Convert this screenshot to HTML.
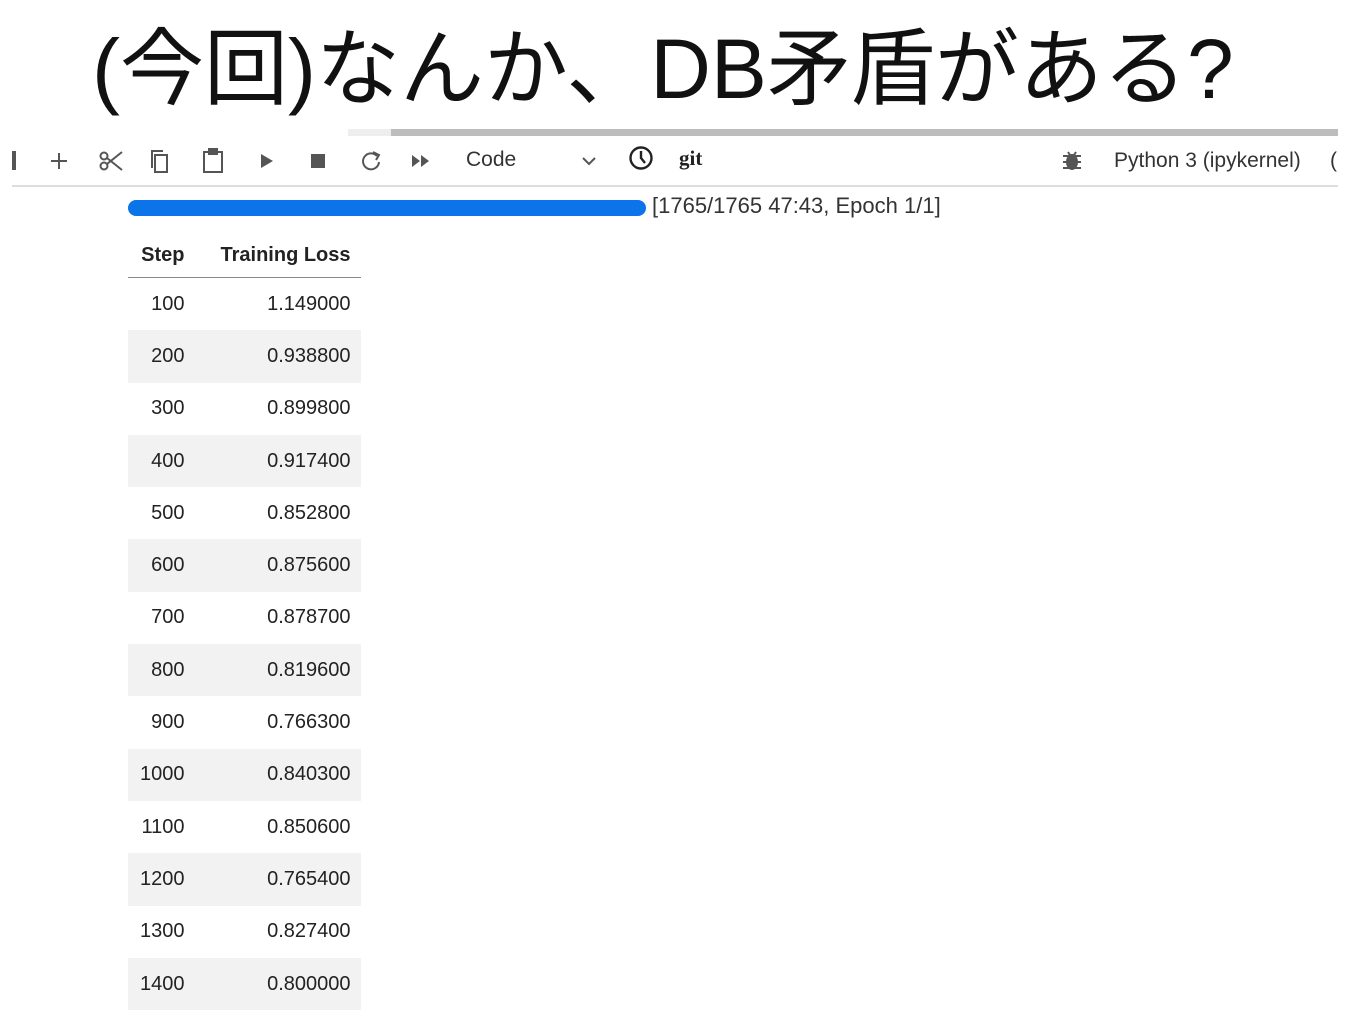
<!DOCTYPE html>
<html><head><meta charset="utf-8"><style>
body{margin:0;width:1372px;height:967px;background:#fff;overflow:hidden;position:relative;font-family:"Liberation Sans","Noto Sans CJK JP",sans-serif;}
.t{position:absolute;left:92px;top:14px;font-size:84px;color:#111;white-space:nowrap;line-height:110px}
.bar{position:absolute;left:348px;top:129px;width:990px;height:7px;background:#bdbdbd}
.bar2{position:absolute;left:348px;top:129px;width:43px;height:7px;background:#eee}
.tb{position:absolute;top:140px;left:12px;width:1326px;height:45px;border-bottom:2px solid #ddd}
.tx{position:absolute;font-size:21px;color:#333}
.pb{position:absolute;left:128px;top:200px;width:518px;height:16px;border-radius:8px;background:#0a74e8}
.pt{position:absolute;left:652px;top:193px;font-size:22px;color:#333}
table{position:absolute;left:128px;top:234px;border-collapse:collapse;font-size:20px;color:#222}
th{height:43px;padding:0 12px;border-bottom:1px solid #888;font-weight:bold;text-align:right}
td{height:52.3px;padding:0 12px;text-align:right}
td:last-child{padding-left:65px;padding-right:10px}
tr:nth-child(odd) td{background:#f2f2f2}
</style></head><body>
<div class="t">(今回)なんか、DB矛盾がある?</div>
<div class="bar"></div><div class="bar2"></div>
<div class="tb"></div>
<svg width="1372" height="190" style="position:absolute;left:0;top:0" fill="none" stroke="#555" stroke-width="2">
<rect x="12" y="151" width="4" height="19" fill="#555" stroke="none"/>
<path d="M51 161h16M59 153v16"/>
<circle cx="104" cy="166" r="3.5"/><circle cx="104" cy="156" r="3.5"/><path d="M107 158l15 12M107 164l15-12"/>
<rect x="155" y="155" width="12" height="17"/><path d="M152 168v-17h11"/>
<rect x="204" y="152" width="18" height="20"/><rect x="209" y="149" width="8" height="5" fill="#555"/>
<path d="M261 154l12 7-12 7z" fill="#555" stroke="none"/>
<rect x="311" y="154" width="14" height="14" fill="#555" stroke="none"/>
<path d="M377 156a8 8 0 1 0 2 6"/><path d="M373 152l6 3-3 5" />
<path d="M412 155l8 6-8 6zM421 155l8 6-8 6z" fill="#555" stroke="none"/>
<path d="M583 158l6 6 6-6"/>
<circle cx="641" cy="158" r="10.5" stroke="#222" stroke-width="2.4"/><path d="M641 151v7l4 5" stroke="#222" stroke-width="2.4"/>
<ellipse cx="1072" cy="162" rx="6" ry="8" fill="#555" stroke="none"/><path d="M1063 156h18M1063 162h18M1063 168h18M1068 152l2 3M1076 152l-2 3" stroke="#555"/>
</svg>
<div class="tx" style="left:466px;top:148px">Code</div>
<div class="tx" style="left:679px;top:146px;font-weight:bold;font-family:'Liberation Serif',serif;color:#222">git</div>
<div class="tx" style="left:1114px;top:149px">Python 3 (ipykernel)</div>
<div class="tx" style="left:1330px;top:149px">(</div>
<div class="pb"></div>
<div class="pt">[1765/1765 47:43, Epoch 1/1]</div>
<table>
<tr><th>Step</th><th style="padding-left:24px;padding-right:10px">Training Loss</th></tr>
<tr><td>100</td><td>1.149000</td></tr>
<tr><td>200</td><td>0.938800</td></tr>
<tr><td>300</td><td>0.899800</td></tr>
<tr><td>400</td><td>0.917400</td></tr>
<tr><td>500</td><td>0.852800</td></tr>
<tr><td>600</td><td>0.875600</td></tr>
<tr><td>700</td><td>0.878700</td></tr>
<tr><td>800</td><td>0.819600</td></tr>
<tr><td>900</td><td>0.766300</td></tr>
<tr><td>1000</td><td>0.840300</td></tr>
<tr><td>1100</td><td>0.850600</td></tr>
<tr><td>1200</td><td>0.765400</td></tr>
<tr><td>1300</td><td>0.827400</td></tr>
<tr><td>1400</td><td>0.800000</td></tr>
</table>
</body></html>
